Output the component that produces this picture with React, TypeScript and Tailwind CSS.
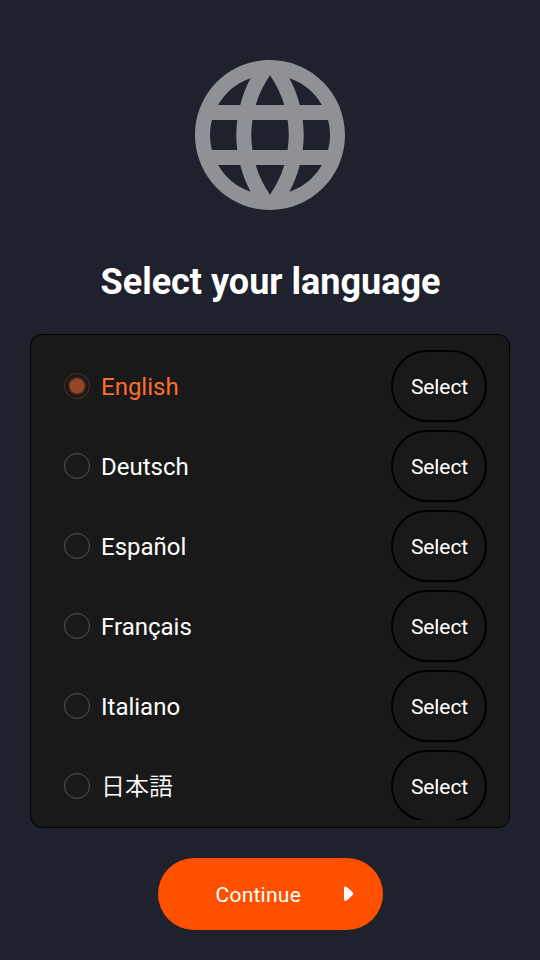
import React, { useState } from 'react';
import { MdLanguage } from 'react-icons/md';

const languages = ['English', 'Deutsch', 'Español', 'Français', 'Italiano', '日本語'];

interface LanguageRowProps {
  name: string;
  selected: boolean;
  onSelect: () => void;
}

function LanguageRow({ name, selected, onSelect }: LanguageRowProps) {
  return (
    <li className="flex h-20 shrink-0 items-center pr-[22px] pl-[33px]">
      <span
        className={`flex size-[26px] items-center justify-center rounded-full border ${
          selected ? 'border-[#57301f]' : 'border-[#525252]'
        }`}
      >
        {selected && (
          <span className="size-3.5 rounded-full bg-[#964627] shadow-[0_0_2px_1px_#964627]" />
        )}
      </span>
      <span
        className={`ml-[11px] grow pt-0.5 text-[24px] leading-8 ${
          selected ? 'text-[#ff6d2e]' : 'text-white'
        } ${name === '日本語' ? 'font-[350]' : ''}`}
      >
        {name}
      </span>
      <button
        onClick={onSelect}
        className="h-[72px] w-24 rounded-[36px] border-2 border-black pt-[3px] pl-px text-[21px] tracking-[-0.1px] text-white"
      >
        Select
      </button>
    </li>
  );
}

export default function App() {
  const [language, setLanguage] = useState('English');

  return (
    <div className="flex h-[960px] w-[540px] flex-col items-center overflow-hidden bg-[#1f212c] font-['Roboto','Noto_Sans_CJK_JP',sans-serif]">
      <MdLanguage className="mt-[45px] size-[180px] shrink-0 text-[#909196]" />
      <h1 className="mt-[33px] pl-px text-[36px] leading-[48px] font-bold whitespace-nowrap text-white">
        Select your language
      </h1>

      <div className="mt-7 h-[494px] w-[480px] shrink-0 rounded-xl border border-black bg-[#191919] pt-[11px]">
        <ul className="flex h-[474px] flex-col overflow-hidden">
          {languages.map((name) => (
            <LanguageRow
              key={name}
              name={name}
              selected={name === language}
              onSelect={() => setLanguage(name)}
            />
          ))}
        </ul>
      </div>

      <button className="mt-[30px] flex h-[72px] w-[225px] shrink-0 items-center rounded-full bg-[#ff5000] pl-[58px] text-[21px] text-white">
        <span className="w-[128px] pt-[3px] text-left tracking-[0.25px]">Continue</span>
        <svg viewBox="0 0 10 16" className="h-4 w-2.5" fill="currentColor">
          <path d="M0 1.600C0 .3 1.700 0 2.900 1L8.700 6.300Q9.800 7.700 8.700 9L2.900 14.300C1.700 15.400 0 15 0 13.800Z" />
        </svg>
      </button>
    </div>
  );
}
